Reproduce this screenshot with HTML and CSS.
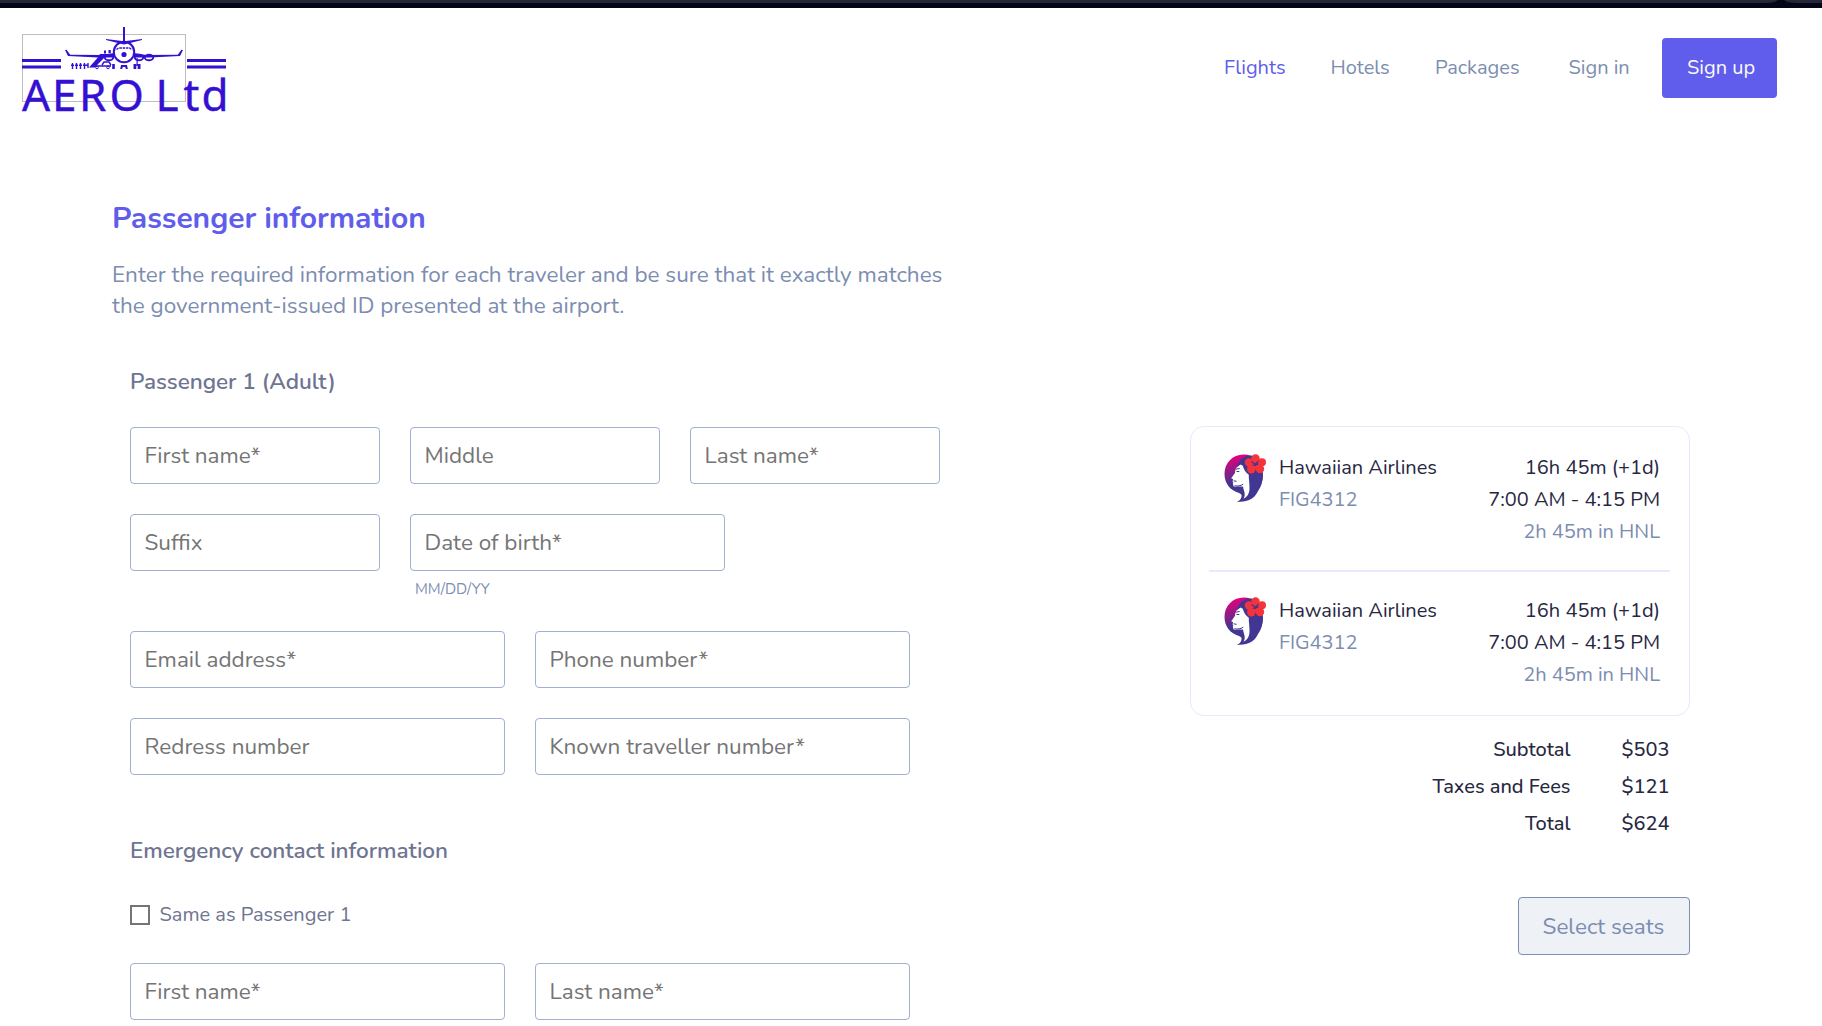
FILE: index.html
```html
<!DOCTYPE html>
<html lang="en">
<head>
<meta charset="utf-8">
<title>AERO Ltd - Passenger information</title>
<link rel="stylesheet" href="styles.css">
</head>
<body>
<svg class="defs" width="0" height="0" aria-hidden="true">
  <defs>
    <linearGradient id="hair" x1="0.15" y1="0.05" x2="0.25" y2="0.62">
      <stop offset="0" stop-color="#e4007c"/>
      <stop offset="1" stop-color="#413691"/>
    </linearGradient>
    <symbol id="hawaiian" viewBox="0 0 42 48">
      <path fill="url(#hair)" d="M19.500.5C8.500.5.5 9 .5 20c0 9.500 6 16.500 14.500 19 2 .8 3.200 2 2.300 4.500-.6 1.700-2 3.300-4.300 4.500 9-.3 15-2 19-7.500 1.500-2 2.200-3.800 2.300-5.500 2.500-3.500 4.700-8 4.700-14C39 8.500 30.500.5 19.500.5z"/>
      <path fill="#413691" d="M28 1.500C21 1 15 5 13.300 12.500L17 13l6 10 1 22c5-1.500 7.600-4 9-8l.4-4.500c.5 1.500.7 3 .6 4.500C37.500 32 39 27 38.500 19L30 6z"/>
      <path fill="#fff" d="M16.500 10.500 13.300 13c-2 1-2 3.600-2.400 6L7.200 24.200l2 1-.7 2.200.9.8-.6 1 .6 2.800c.6.9 2.300.8 5 .6 2-.1 3.700-.2 4.700.2.2 3 1.700 5 1.600 7.700 0 1.700-.5 3-1.200 4.300 3.500-1.700 5.600-4.500 6-9.500.3-6-1-11-.7-14.500-3-2.200-5-5-6-9z"/>
      <path d="M11.500 15.300l4.200-.9M12.500 17.500h2.800M9.600 26.800l3 .5M10.500 31.700c3 .6 6 .4 8.700-1.500" fill="none" stroke="#413691" stroke-width="1"/>
      <g fill="#f4333c">
        <circle cx="31.500" cy="4.500" r="4.200"/><circle cx="38" cy="8.200" r="4"/>
        <circle cx="36" cy="15" r="4.200"/><circle cx="27.300" cy="15.200" r="4.200"/>
        <circle cx="25" cy="8.500" r="4.200"/><circle cx="31.500" cy="10.500" r="5"/>
      </g>
      <path d="M27.500 7.500l3.500 2.700 3.500-3M28.500 11.500l6-1.700M31 10l1 2" fill="none" stroke="#413691" stroke-width="1.200"/>
    </symbol>
  </defs>
</svg>
<div class="chrome"><svg width="1822" height="8" viewBox="0 0 1822 8"><path fill="#252838" d="M0 0h1778q-3 2.800-13 3H0zM1784 0h38v3h-25q-10-.2-13-3z"/></svg></div>
<header class="header">
  <a class="brand" aria-label="AERO Ltd">
    <svg width="208" height="100" viewBox="20 25 208 100">
      <rect x="22.500" y="34.500" width="163" height="67" fill="none" stroke="#bdbdbd"/>
      <g fill="#3410d2">
        <path d="M22 59h39v3H22zM22 65.500h39v3H22zM187 59h39v3h-39zM187 65.500h39v3h-39z"/>
        <path d="M123 27h2v15h-2z"/>
        <path d="M106 39l18 2.300L142 39v.9L124 44.500 106 39.900z"/>
        <path d="M65 50l1.600-.3 3.600 5 31.800.4L114 53v4.600L98 57.500l-30-1.500zM183 50l-1.600-.3-3.600 5-31.800.4L134 53v4.600l16-.1 30-1.500z"/>
        <circle cx="124" cy="54.500" r="2.600"/>
        <path d="M89 67.500l8-9 3-4.500h14v3h-9l-6 6-4 4.500zM104 50.500h2v3h-2zM108.500 50h2.300v3h-2.300z"/>
        <path d="M112.200 64h2.600v5h-2.600zM121 65h6l.8 4h-2l-.6-2h-2.400l-.6 2h-2zM133.500 64h2.800v5h-2.800zM137.700 64h2.800v5h-2.800zM136.500 58h1.200v8h-1.200z"/>
      </g>
      <g fill="none" stroke="#3410d2">
        <circle cx="124" cy="52" r="10.200" stroke-width="2"/>
        <path d="M116.500 49.500l2-1.500h11l2 1.500" stroke-dasharray="2.500 .8" stroke-width="1.300"/>
        <ellipse cx="139" cy="57.500" rx="4.200" ry="2.800" stroke-width="1.900"/>
        <ellipse cx="149" cy="57.500" rx="4.200" ry="2.800" stroke-width="1.900"/>
        <ellipse cx="109" cy="57.500" rx="4.200" ry="2.800" stroke-width="1.900"/>
        <path d="M95 66h16M102 65l2-3h5l2 3" stroke-width="1.400"/>
        <circle cx="97" cy="67.500" r="1.300"/><circle cx="108" cy="67.500" r="1.300"/>
        <path d="M72.500 63v6M76.500 63v6M80.500 63v6M84.500 63v6M88 63v5M71 65.200h3M75 65.200h3M79 65.200h3M83 65.200h5" stroke-width="1.400"/>
      </g>
      <text class="brand-name" y="110.500" x="22 52 79 109.500 155.500 183.500 201.500">AEROLtd</text>
    </svg>
  </a>
  <nav class="nav">
    <a class="active">Flights</a>
    <a>Hotels</a>
    <a>Packages</a>
    <a>Sign in</a>
    <a class="signup">Sign up</a>
  </nav>
</header>
<main class="page">
  <section class="form">
    <h1>Passenger information</h1>
    <p class="lead">Enter the required information for each traveler and be sure that it exactly matches<br>the government-issued ID presented at the airport.</p>
    <div class="fields">
      <h2>Passenger 1 (Adult)</h2>
      <div class="row first">
        <input class="third" placeholder="First name*">
        <input class="third" placeholder="Middle">
        <input class="third" placeholder="Last name*">
      </div>
      <div class="row">
        <input class="third" placeholder="Suffix">
        <div class="dob">
          <input placeholder="Date of birth*">
          <span class="hint">MM/DD/YY</span>
        </div>
      </div>
      <div class="row">
        <input class="half" placeholder="Email address*">
        <input class="half" placeholder="Phone number*">
      </div>
      <div class="row">
        <input class="half" placeholder="Redress number">
        <input class="half" placeholder="Known traveller number*">
      </div>
      <h2 class="emergency">Emergency contact information</h2>
      <label class="same"><input type="checkbox"><span>Same as Passenger 1</span></label>
      <div class="row">
        <input class="half" placeholder="First name*">
        <input class="half" placeholder="Last name*">
      </div>
    </div>
  </section>
  <aside class="summary">
    <div class="card">
      <div class="flight">
        <svg class="airline" width="42" height="48"><use href="#hawaiian"/></svg>
        <div class="carrier"><div>Hawaiian Airlines</div><div class="muted">FIG4312</div></div>
        <div class="times"><div>16h 45m (+1d)</div><div>7:00 AM - 4:15 PM</div><div class="muted">2h 45m in HNL</div></div>
      </div>
      <div class="flight">
        <svg class="airline" width="42" height="48"><use href="#hawaiian"/></svg>
        <div class="carrier"><div>Hawaiian Airlines</div><div class="muted">FIG4312</div></div>
        <div class="times"><div>16h 45m (+1d)</div><div>7:00 AM - 4:15 PM</div><div class="muted">2h 45m in HNL</div></div>
      </div>
    </div>
    <div class="totals">
      <span>Subtotal</span><span>$503</span>
      <span>Taxes and Fees</span><span>$121</span>
      <span>Total</span><span>$624</span>
    </div>
    <button class="seats">Select seats</button>
  </aside>
</main>
</body>
</html>
```
FILE: styles.css
```css
* { box-sizing: border-box; }
body {
  margin: 0;
  height: 1026px;
  overflow: hidden;
  background: #fff;
  color: #27273f;
  font-family: Nunito, Lato, sans-serif;
  font-size: 20px;
}
.defs { display: block; position: absolute; }
.chrome { height: 8px; background: #020617; }
.chrome svg { display: block; }
.header {
  height: 120px;
  display: flex;
  justify-content: space-between;
  padding: 17px 45px 0 20px;
}
.brand svg { display: block; }
.brand-name {
  font-family: "Noto Sans", sans-serif;
  font-size: 44px;
  fill: #3410d2;
  stroke: #3410d2;
  stroke-width: .4px;
}
.nav {
  display: grid;
  grid-template-columns: 106.5px 104.5px 133.5px 93.5px 115px;
  height: 60px;
  margin-top: 13px;
  line-height: 60px;
  color: #7c8db0;
}
.nav .active { color: #605dec; }
.nav .signup {
  background: #605dec;
  color: #fafafa;
  border-radius: 4px;
  padding-left: 25px;
}
.page { display: flex; justify-content: space-between; padding: 71px 132px 0 112px; }
h1 {
  margin: 0;
  font-size: 30px;
  line-height: 40px;
  font-weight: 700;
  letter-spacing: -.04px;
  color: #605dec;
}
.lead {
  margin: 20px 0 45px;
  font-size: 22.5px;
  line-height: 31px;
  color: #7c8db0;
  white-space: nowrap;
}
.fields { padding-left: 18px; }
h2 {
  margin: 0;
  font-size: 22.5px;
  line-height: 31px;
  font-weight: 600;
  letter-spacing: -.03px;
  color: #6e7491;
}
.row { display: flex; align-items: flex-start; gap: 30px; margin-bottom: 30px; }
.row.first { margin-top: 30px; }
.row input, .dob input {
  height: 57px;
  padding: 0 13.5px;
  border: 1px solid #a1afd0;
  border-radius: 4px;
  background: #fff;
  font: 400 22.5px Nunito, Lato, sans-serif;
}
input::placeholder { color: #757575; opacity: 1; }
.third { width: 250px; }
.half { width: 375px; }
.dob { display: flex; flex-direction: column; width: 315px; }
.hint {
  margin: 6px 0 0 5px;
  font-size: 15px;
  line-height: 24px;
  color: #7c8db0;
}
.emergency { margin-top: 60px; }
.same {
  display: flex;
  align-items: center;
  gap: 9.5px;
  height: 20px;
  margin: 39px 0 38px;
  color: #6e7491;
}
.same input {
  appearance: none;
  width: 20px;
  height: 20px;
  margin: 0;
  border: 2px solid #757575;
}
.same span { line-height: 28px; }
.summary { width: 500px; padding-top: 227px; display: flex; flex-direction: column; }
.card { border: 1px solid #e9e8fc; border-radius: 14px; height: 290px; padding: 0 19px 0 18px; }
.flight {
  display: flex;
  height: 143px;
  padding: 24.5px 10px 0 15px;
  line-height: 32px;
}
.flight + .flight { border-top: 2px solid #e9e8fc; padding-top: 22.5px; }
.airline { margin-top: 2px; }
.carrier { margin-left: 13px; }
.times { margin-left: auto; text-align: right; }
.muted { color: #7c8db0; }
.totals {
  display: grid;
  grid-template-columns: 380.5px 99px;
  line-height: 37px;
  margin-top: 15px;
  text-align: right;
  font-weight: 500;
}
.seats {
  align-self: flex-end;
  width: 172px;
  height: 58px;
  margin-top: 55px;
  padding: 0 1px 0 0;
  border: 1px solid #7c8db0;
  border-radius: 4px;
  background: #eef1f6;
  color: #7c8db0;
  font: 400 22.5px Nunito, Lato, sans-serif;
}
```
